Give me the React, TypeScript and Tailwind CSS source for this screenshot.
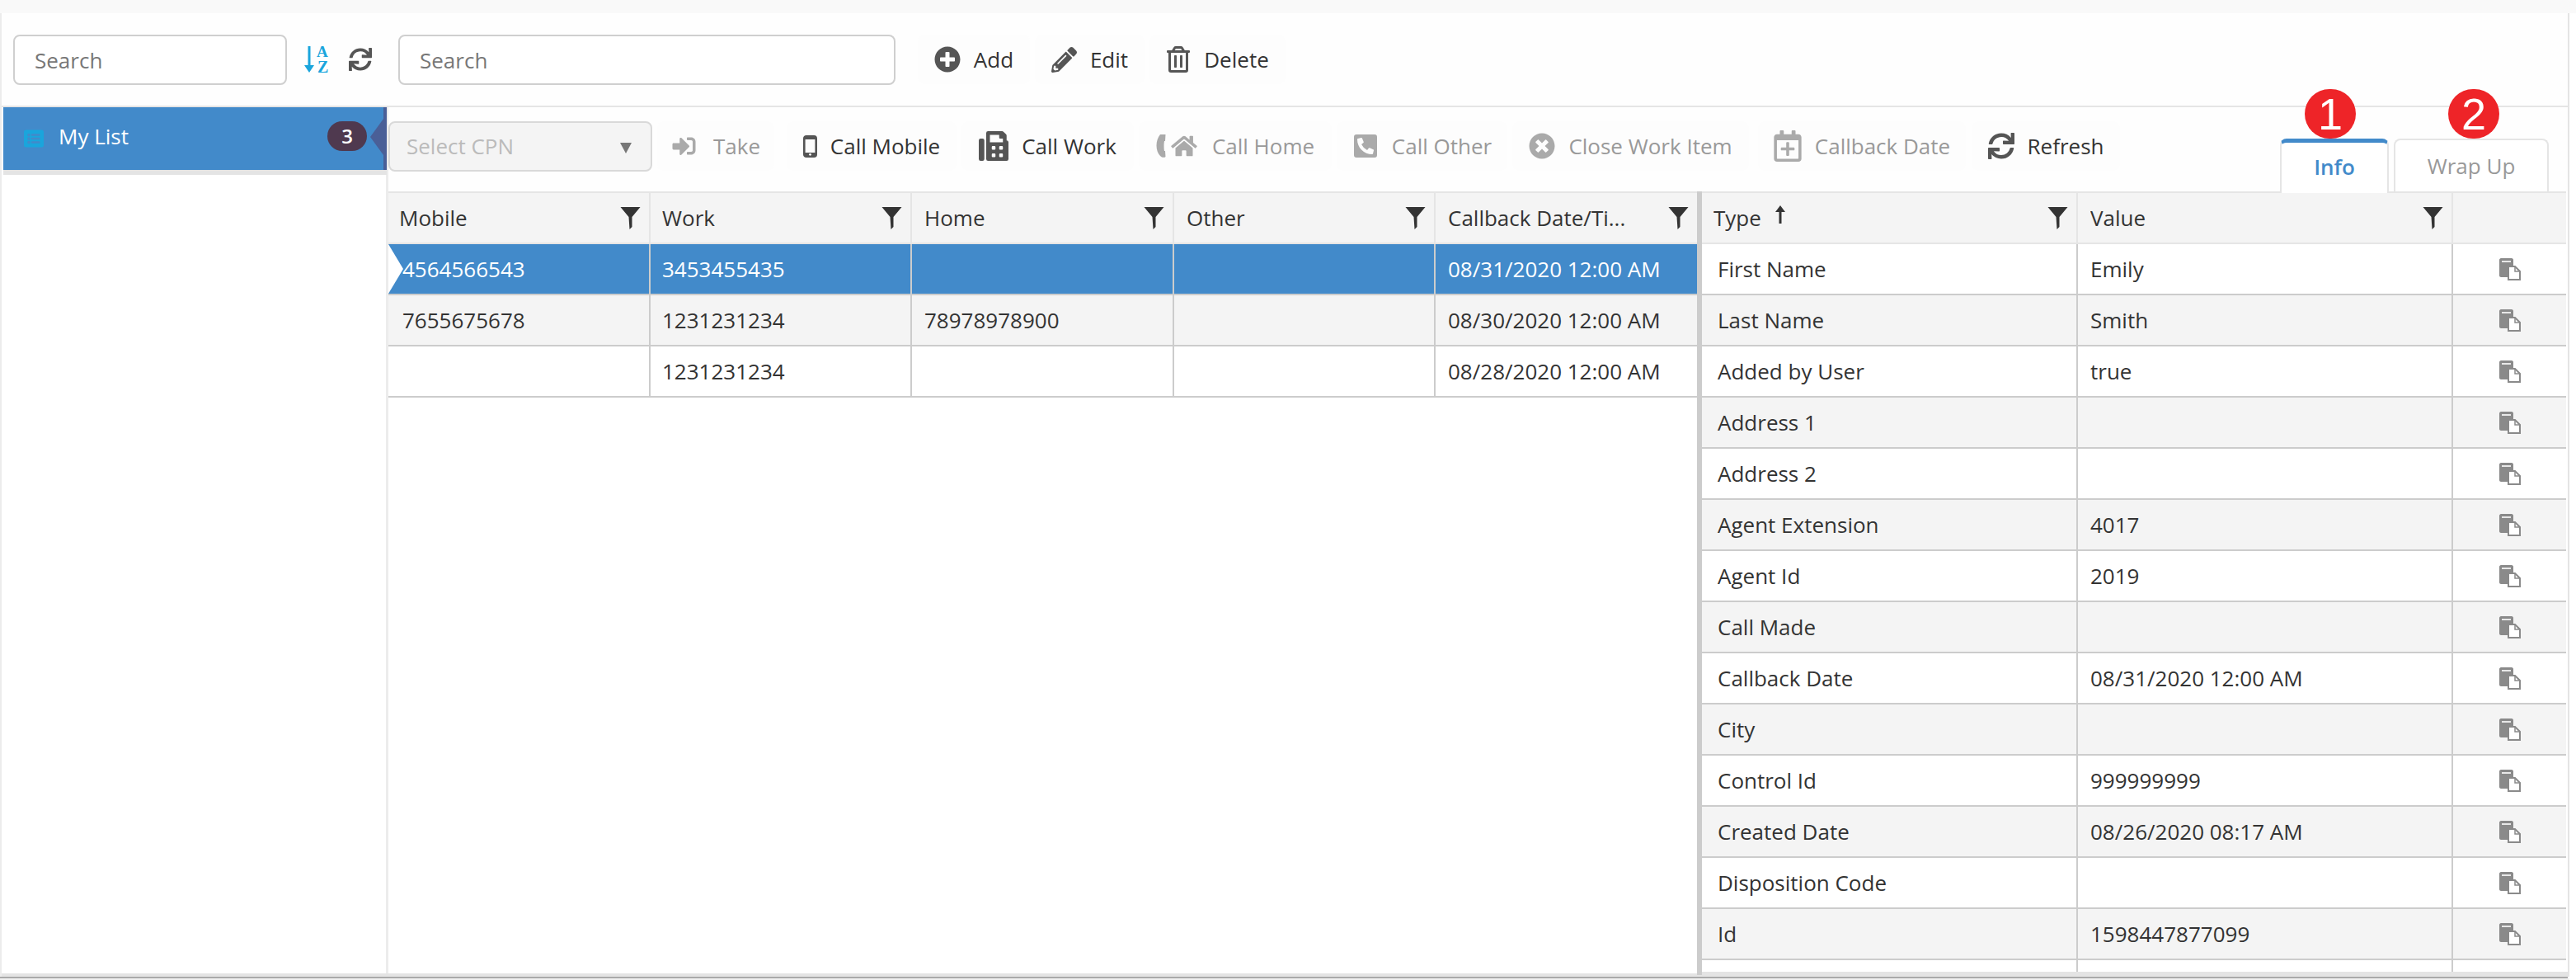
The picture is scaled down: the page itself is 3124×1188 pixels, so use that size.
import React from "react";
import {
  FaPlusCircle, FaPencilAlt, FaRegTrashAlt, FaSync, FaSignInAlt, FaFax, FaHome,
  FaPhoneSquareAlt, FaTimesCircle, FaRegCalendarPlus, FaListAlt,
} from "react-icons/fa";

const Filter = () => (
  <svg viewBox="0 0 24 27" className="w-[25px] h-[27px] shrink-0 text-[#333]" fill="currentColor">
    <path d="M0 0H24L14 12V24L11 27L10 12Z" />
  </svg>
);

const Paste = () => (
  <svg viewBox="0 0 26 27" className="w-[26px] h-[27px]">
    <path d="M2 0H15C16 0 17 1 17 2V23H2C1 23 0 22 0 21V2C0 1 1 0 2 0Z" fill="#8a8a8a" />
    <rect x="3" y="3" width="11" height="2" fill="#e8e8e8" />
    <path d="M11 10H19L25 16V26H11Z" fill="#fff" stroke="#8a8a8a" strokeWidth="2" />
    <path d="M19 10V16H25" fill="none" stroke="#8a8a8a" strokeWidth="1.5" />
  </svg>
);

const SortAz = () => (
  <svg viewBox="0 0 30 32" className="w-[30px] h-[32px] text-[#1aa5dc] overflow-visible" fill="currentColor">
    <path d="M4.5 0H7.5V23H12L6 32L0 23H4.5Z" />
    <text x="15" y="13" fontFamily="'Liberation Serif', serif" fontWeight="700" fontSize="19">A</text>
    <text x="16" y="32" fontFamily="'Liberation Serif', serif" fontWeight="700" fontSize="20">Z</text>
  </svg>
);

const Mobile = () => (
  <svg viewBox="0 0 17 27" className="w-[17px] h-[27px]" fill="none">
    <rect x="1.3" y="1.3" width="14.4" height="24.4" rx="2.5" stroke="#555" strokeWidth="2.6" />
    <rect x="1" y="1" width="15" height="4" fill="#555" />
    <rect x="1" y="21" width="15" height="5" fill="#555" />
    <circle cx="8.5" cy="23.3" r="1.4" fill="#fff" />
  </svg>
);

const PhoneParen = () => (
  <svg viewBox="0 0 12 28" className="w-[12px] h-[28px]" fill="#aaa">
    <path d="M5 0H11.5L11 8H10C9.4 11 9.4 17 10 20H11L11.5 27C10 28.5 7 28 5 26C-1 20 -1 7 5 0Z" />
  </svg>
);

const Btn = ({ w, icon, label, off, gap }: { w: string; icon: React.ReactNode; label: string; off?: boolean; gap?: string }) => (
  <div
    className={`${w} ${gap ?? "gap-[16px]"} h-[60px] shrink-0 flex items-center justify-center rounded-lg bg-[#fdfdfd] text-[26px] ${off ? "text-[#999]" : "text-[#333]"}`}
  >
    {icon}
    <span>{label}</span>
  </div>
);

const leftRows = [
  ["4564566543", "3453455435", "", "", "08/31/2020 12:00 AM"],
  ["7655675678", "1231231234", "78978978900", "", "08/30/2020 12:00 AM"],
  ["", "1231231234", "", "", "08/28/2020 12:00 AM"],
];

const detailRows = [
  ["First Name", "Emily"],
  ["Last Name", "Smith"],
  ["Added by User", "true"],
  ["Address 1", ""],
  ["Address 2", ""],
  ["Agent Extension", "4017"],
  ["Agent Id", "2019"],
  ["Call Made", ""],
  ["Callback Date", "08/31/2020 12:00 AM"],
  ["City", ""],
  ["Control Id", "999999999"],
  ["Created Date", "08/26/2020 08:17 AM"],
  ["Disposition Code", ""],
  ["Id", "1598447877099"],
  ["", ""],
];

const leftCols = "grid grid-cols-[318px_317px_318px_317px_317px]";
const rightCols = "grid grid-cols-[456px_455px_137px]";

const HeadCell = ({ label, children, last, pad }: { label?: string; children?: React.ReactNode; last?: boolean; pad?: string }) => (
  <div className={`h-full flex items-center ${pad ?? "pl-[15px]"} pr-[10px] gap-[18px] ${last ? "" : "border-r-2 border-[#e5e5e5]"}`}>
    {label && <span className="truncate">{label}</span>}
    {children}
  </div>
);

export default function App() {
  return (
    <div className="relative w-[3124px] h-[1188px] overflow-hidden bg-white flex flex-col font-['Open_Sans',sans-serif] text-[26px] text-[#333]">
      <div className="h-[16px] shrink-0 bg-[#f9f9f9]" />
      <div className="flex-1 min-h-0 flex">
        <aside className="w-[471px] shrink-0 border-l-2 border-r-[3px] border-[#ececec] flex flex-col">
          <div className="h-[114px] shrink-0 pl-[14px] pr-[14px] flex items-center border-b-2 border-[#e5e5e5] bg-[#fefefe] -mr-[3px]">
            <input
              placeholder="Search"
              className="w-[332px] h-[61px] rounded-lg border-2 border-[#cfcfcf] bg-white px-[24px] pt-[2px] text-[26px] placeholder:text-[#777] outline-none"
            />
            <span className="ml-[21px] flex"><SortAz /></span>
            <FaSync className="ml-[24px] w-[28px] h-[28px] text-[#555]" />
          </div>
          <div className="ml-[2px] -mr-[1px] h-[76px] shrink-0 bg-[#428aca] border-r-[4px] border-[#4a5f97] flex items-center relative pl-[24px] text-white">
            <FaListAlt className="w-[26px] h-[24px] text-[#1aa5dc]" />
            <span className="ml-[17px] -mt-[6px]">My List</span>
            <span className="ml-auto mr-[20px] -mt-[6px] w-[48px] h-[36px] rounded-full bg-[#4f394f] flex items-center justify-center text-[24px] font-semibold">3</span>
            <span className="absolute right-0 top-[14px] w-0 h-0 border-y-[22px] border-y-transparent border-r-[16px] border-r-[#4a5f97]" />
          </div>
          <div className="ml-[2px] -mr-[1px] h-[6px] shrink-0 bg-[#e4e4e4]" />
          <div className="mt-auto -mr-[3px] h-[4px] shrink-0 bg-[#e4e4e4]" />
        </aside>

        <main className="w-[2645px] shrink-0 border-r-2 border-[#e4e4e4] flex flex-col min-h-0">
          <div className="h-[114px] shrink-0 pl-[12px] flex items-center gap-[6px] border-b-2 border-[#e5e5e5] bg-[#fefefe]">
            <input
              placeholder="Search"
              className="w-[603px] h-[61px] rounded-lg border-2 border-[#cfcfcf] bg-white px-[24px] pt-[2px] text-[26px] placeholder:text-[#777] outline-none mr-[21px]"
            />
            <Btn w="w-[136px]" icon={<FaPlusCircle className="w-[32px] h-[32px] text-[#555]" />} label="Add" />
            <Btn w="w-[133px]" icon={<FaPencilAlt className="w-[31px] h-[31px] text-[#555]" />} label="Edit" />
            <Btn w="w-[165px]" icon={<FaRegTrashAlt className="w-[30px] h-[32px] text-[#555]" />} label="Delete" />
          </div>

          <div className="h-[102px] shrink-0 flex items-start pt-[17px] bg-[#fefefe]">
            <div className="w-[320px] h-[61px] shrink-0 rounded-lg border-2 border-[#d9d9d9] bg-[#f4f4f4] flex items-center pl-[20px] pr-[23px] text-[#bbb] mr-[6px]">
              <span className="-mt-[1px]">Select CPN</span>
              <span className="ml-auto mt-[3px] w-0 h-0 border-x-[7px] border-x-transparent border-t-[13px] border-t-[#777]" />
            </div>
            <div className="flex gap-[6px]">
              <Btn w="w-[142px]" off gap="gap-[20px]" icon={<FaSignInAlt className="w-[31px] h-[28px] text-[#aaa]" />} label="Take" />
              <Btn w="ml-[9px] w-[206px]" icon={<Mobile />} label="Call Mobile" />
              <Btn w="w-[209px]" icon={<FaFax className="w-[36px] h-[38px] text-[#555]" />} label="Call Work" />
              <Btn w="w-[234px]" off gap="gap-[18px]" icon={<span className="flex items-center gap-[6px]"><PhoneParen /><FaHome className="w-[32px] h-[28px] text-[#aaa]" /></span>} label="Call Home" />
              <Btn w="w-[207px]" off icon={<FaPhoneSquareAlt className="w-[32px] h-[32px] text-[#aaa]" />} label="Call Other" />
              <Btn w="w-[287px]" off icon={<FaTimesCircle className="w-[32px] h-[32px] text-[#aaa]" />} label="Close Work Item" />
              <Btn w="ml-[5px] w-[252px]" off icon={<FaRegCalendarPlus className="w-[34px] h-[38px] text-[#aaa]" />} label="Callback Date" />
              <Btn w="ml-[1px] w-[180px]" icon={<FaSync className="w-[32px] h-[32px] text-[#555]" />} label="Refresh" />
            </div>
            <div className="ml-auto self-end flex items-end gap-[6px] mr-[23px] h-[66px] -mb-[2px] relative z-10">
              <div className="w-[132px] h-[66px] bg-white rounded-t-lg border-x-2 border-[#e5e5e5] border-t-[5px] border-t-[#428aca] flex items-center justify-center text-[#428aca] font-semibold pb-[2px]">Info</div>
              <div className="w-[188px] h-[64px] mb-[2px] bg-white rounded-t-lg border-x-2 border-t-2 border-[#e5e5e5] flex items-center justify-center text-[#999]">Wrap Up</div>
            </div>
          </div>

          <div className="flex-1 min-h-0 flex bg-[#e4e4e4]">
            <section className="w-[1587px] shrink-0 overflow-hidden bg-white mb-[4px]">
              <div className={`${leftCols} h-[64px] bg-[#f4f4f4] border-y-2 border-[#e5e5e5]`}>
                {["Mobile", "Work", "Home", "Other", "Callback Date/Ti..."].map((h, i) => (
                  <HeadCell key={h} label={h} last={i === 4} pad={i === 0 ? "pl-[13px]" : i === 1 ? "pl-[14px]" : undefined}>
                    <span className="ml-auto"><Filter /></span>
                  </HeadCell>
                ))}
              </div>
              {leftRows.map((r, i) => (
                <div
                  key={i}
                  className={`${leftCols} h-[62px] border-b-2 relative ${i === 0 ? "bg-[#428aca] text-white border-[#ccc]" : i === 1 ? "bg-[#f4f4f4] border-[#ccc]" : "bg-white border-[#ccc]"}`}
                >
                  {r.map((c, j) => (
                    <div key={j} className={`flex items-center ${j === 0 ? "pl-[17px]" : j === 1 ? "pl-[14px]" : "pl-[15px]"} ${j < 4 ? "border-r-2 border-[#ccc]" : ""}`}>{c}</div>
                  ))}
                  {i === 0 && (
                    <span className="absolute left-0 top-0 w-0 h-0 border-y-[30px] border-y-transparent border-l-[18px] border-l-white" />
                  )}
                </div>
              ))}
            </section>

            <div className="w-[6px] shrink-0 bg-[#cccccc] mb-[2px]" />

            <section className="w-[1050px] shrink-0 overflow-hidden mb-[6px] bg-white pr-[2px]">
              <div className={`${rightCols} h-[64px] bg-[#f4f4f4] border-y-2 border-[#e5e5e5]`}>
                <HeadCell label="Type" pad="pl-[14px]">
                  <svg viewBox="0 0 14 22" className="w-[14px] h-[22px] -ml-[2px] -mt-[8px]" fill="#333">
                    <path d="M7 0L13 8H8.5V22H5.5V8H1Z" />
                  </svg>
                  <span className="ml-auto"><Filter /></span>
                </HeadCell>
                <HeadCell label="Value">
                  <span className="ml-auto"><Filter /></span>
                </HeadCell>
                <HeadCell last />
              </div>
              <div className="h-[882px] overflow-hidden">
                {detailRows.map((r, i) => (
                  <div key={i} className={`${rightCols} h-[62px] border-b-2 border-[#ccc] ${i % 2 ? "bg-[#f4f4f4]" : "bg-white"}`}>
                    <div className="flex items-center pl-[19px] border-r-2 border-[#ccc]">{r[0]}</div>
                    <div className="flex items-center pl-[15px] border-r-2 border-[#ccc]">{r[1]}</div>
                    <div className="flex items-center justify-center">{r[0] && <Paste />}</div>
                  </div>
                ))}
              </div>
            </section>
          </div>
        </main>
      </div>
      <div className="h-[2px] w-[3114px] shrink-0 bg-[#aaaaaa]" />
      <div className="h-[2px] w-[3116px] shrink-0 bg-[#f0f0f0]" />

      <div className="absolute left-[2795px] top-[108px] w-[62px] h-[60px] rounded-full bg-[#ee2428] text-white flex items-center justify-center text-[54px] font-['Liberation_Sans',sans-serif] leading-none">1</div>
      <div className="absolute left-[2969px] top-[108px] w-[62px] h-[60px] rounded-full bg-[#ee2428] text-white flex items-center justify-center text-[54px] font-['Liberation_Sans',sans-serif] leading-none">2</div>
    </div>
  );
}
